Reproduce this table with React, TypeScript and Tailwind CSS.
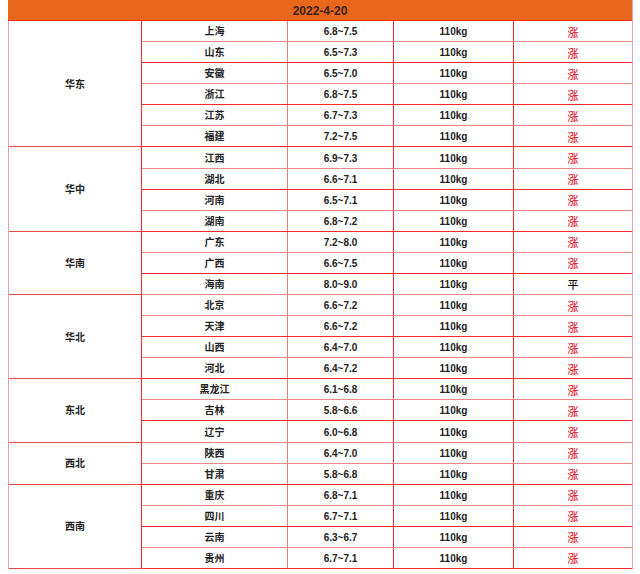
import React from "react";

type Row = [string, string, string];
const groups: { name: string; rows: Row[] }[] = [
  {
    name: "华东",
    rows: [
      ["上海", "6.8~7.5", "涨"],
      ["山东", "6.5~7.3", "涨"],
      ["安徽", "6.5~7.0", "涨"],
      ["浙江", "6.8~7.5", "涨"],
      ["江苏", "6.7~7.3", "涨"],
      ["福建", "7.2~7.5", "涨"],
    ],
  },
  {
    name: "华中",
    rows: [
      ["江西", "6.9~7.3", "涨"],
      ["湖北", "6.6~7.1", "涨"],
      ["河南", "6.5~7.1", "涨"],
      ["湖南", "6.8~7.2", "涨"],
    ],
  },
  {
    name: "华南",
    rows: [
      ["广东", "7.2~8.0", "涨"],
      ["广西", "6.6~7.5", "涨"],
      ["海南", "8.0~9.0", "平"],
    ],
  },
  {
    name: "华北",
    rows: [
      ["北京", "6.6~7.2", "涨"],
      ["天津", "6.6~7.2", "涨"],
      ["山西", "6.4~7.0", "涨"],
      ["河北", "6.4~7.2", "涨"],
    ],
  },
  {
    name: "东北",
    rows: [
      ["黑龙江", "6.1~6.8", "涨"],
      ["吉林", "5.8~6.6", "涨"],
      ["辽宁", "6.0~6.8", "涨"],
    ],
  },
  {
    name: "西北",
    rows: [
      ["陕西", "6.4~7.0", "涨"],
      ["甘肃", "5.8~6.8", "涨"],
    ],
  },
  {
    name: "西南",
    rows: [
      ["重庆", "6.8~7.1", "涨"],
      ["四川", "6.7~7.1", "涨"],
      ["云南", "6.3~6.7", "涨"],
      ["贵州", "6.7~7.1", "涨"],
    ],
  },
];

export default function App() {
  return (
    <div
      className="w-[640px] h-[574px] bg-white text-[#222] font-bold text-[10px] leading-none"
      style={{ fontFamily: '"Liberation Sans", "Noto Sans CJK SC", sans-serif' }}
    >
      <div className="ml-[8px] w-[625px] border-r border-r-[#e4a0a8]">
        <div className="h-[21px] bg-[#e9671c] border-b border-b-[#ff2a1a] flex items-center justify-center pt-[2px] text-[12px] text-[#3a2418]">
          2022-4-20
        </div>
        <div className="border-l border-l-[#e4a0a8]">
          {groups.map((g) => (
            <div key={g.name} className="flex">
              <div className="w-[133px] shrink-0 border-r border-r-[#ff2a2a] border-b border-b-[#e84a4a] flex items-center justify-center pt-[2px]">
                {g.name}
              </div>
              <div className="flex-1 flex flex-col">
                {g.rows.map((r, i) => (
                  <div
                    key={r[0]}
                    className={
                      "flex h-[21.08px] items-center border-b " +
                      (i % 2 === 0 ? "border-b-[#ec8888]" : "border-b-[#ff2a2a]")
                    }
                  >
                    <div className="w-[146px] h-full shrink-0 border-r border-r-[#f07a7a] flex items-center justify-center pt-[2px]">
                      {r[0]}
                    </div>
                    <div className="w-[106px] h-full shrink-0 border-r border-r-[#ff2a2a] flex items-center justify-center pt-[2px]">
                      {r[1]}
                    </div>
                    <div className="w-[120px] h-full shrink-0 border-r border-r-[#ff2a2a] flex items-center justify-center pt-[2px]">
                      110kg
                    </div>
                    <div
                      className={
                        "flex-1 h-full flex items-center justify-center pt-[2px] font-medium text-[11px] " +
                        (r[2] === "涨" ? "text-[#e8283a]" : "text-[#111]")
                      }
                      style={{ fontFamily: '"Noto Sans CJK SC", sans-serif' }}
                    >
                      {r[2]}
                    </div>
                  </div>
                ))}
              </div>
            </div>
          ))}
        </div>
      </div>
    </div>
  );
}
